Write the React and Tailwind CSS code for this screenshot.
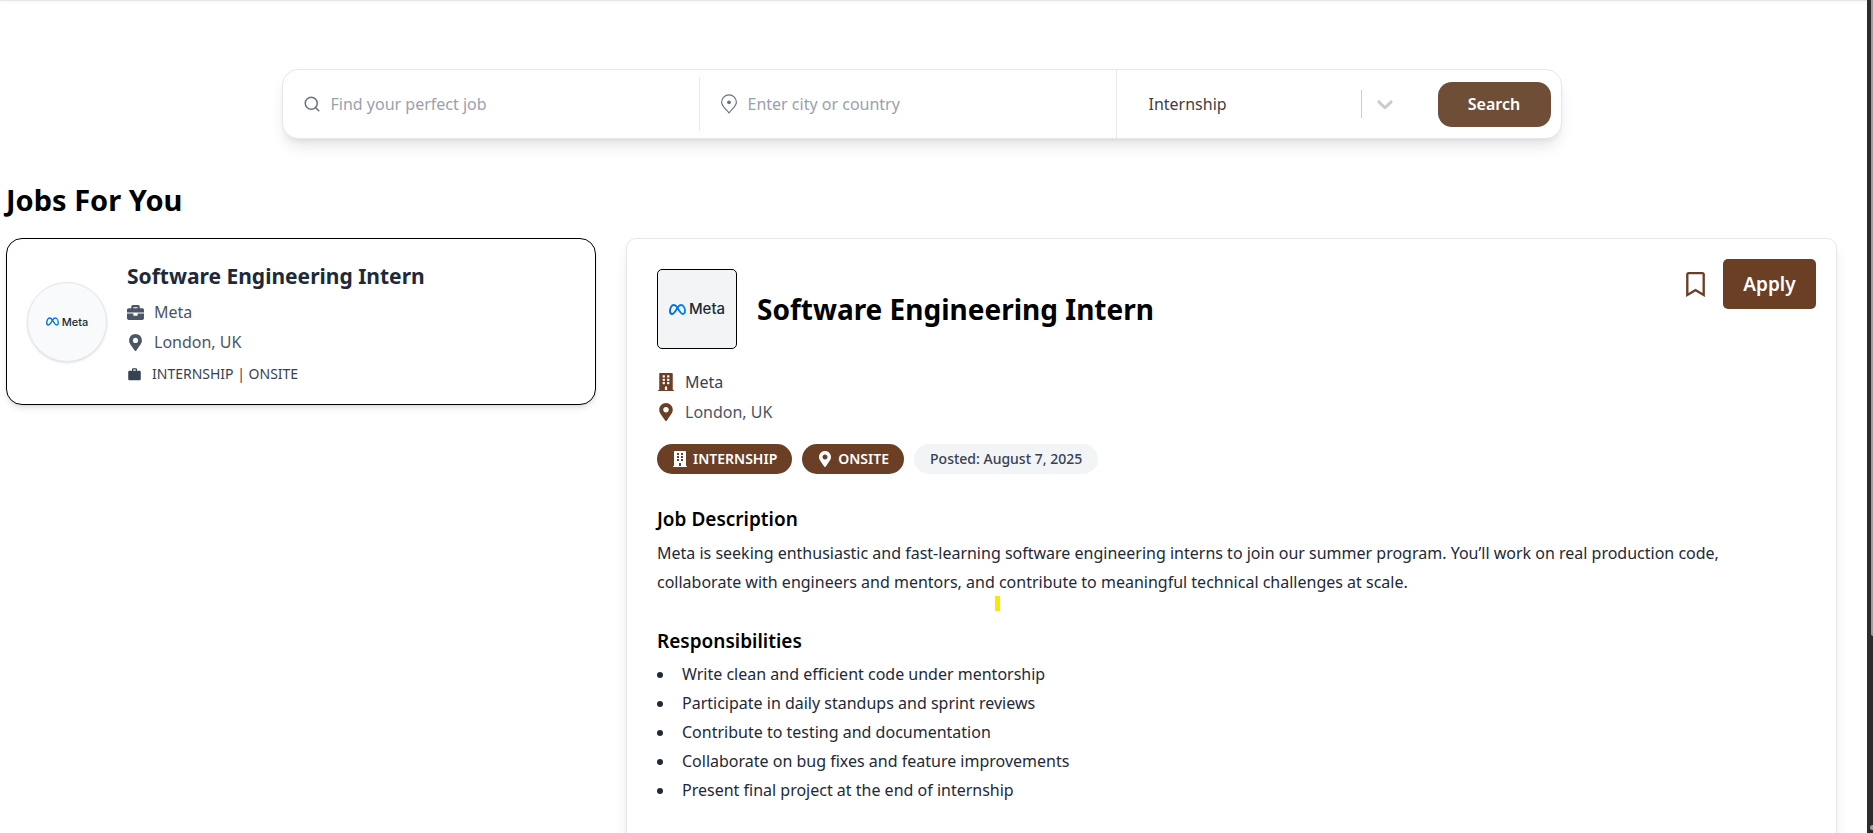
import React from "react";
import { FaBriefcase, FaBuilding, FaMapMarkerAlt, FaRegBookmark } from "react-icons/fa";
import { MdWork } from "react-icons/md";
import { FiSearch } from "react-icons/fi";

const responsibilities = [
  "Write clean and efficient code under mentorship",
  "Participate in daily standups and sprint reviews",
  "Contribute to testing and documentation",
  "Collaborate on bug fixes and feature improvements",
  "Present final project at the end of internship",
];

function PinIcon({ className }) {
  return (
    <svg viewBox="0 0 18 20" fill="none" stroke="currentColor" strokeWidth="1.2" strokeLinejoin="round" className={className} aria-hidden="true">
      <path d="M9 18.9C7.5 16.3 1.6 12.3 1.6 8.3a7.4 7.4 0 0 1 14.8 0c0 4-5.9 8-7.4 10.600z" />
      <circle cx="9" cy="8.300" r="1.900" fill="currentColor" stroke="none" />
    </svg>
  );
}

function ChevronIcon() {
  return (
    <svg viewBox="0 0 20 20" className="pointer-events-none ml-[10px] size-[26px] shrink-0 fill-[#cccccc]" aria-hidden="true">
      <path d="M4.516 7.548c0.436-0.446 1.043-0.481 1.576 0l3.908 3.747 3.908-3.747c0.533-0.481 1.141-0.446 1.574 0 0.436 0.445 0.408 1.197 0 1.615-0.406 0.418-4.695 4.502-4.695 4.502-0.217 0.223-0.502 0.335-0.787 0.335s-0.57-0.112-0.789-0.335c0 0-4.287-4.084-4.695-4.502s-0.436-1.17 0-1.615z" />
    </svg>
  );
}

function MetaLogo({ className, textClassName }) {
  return (
    <span className="flex items-center gap-[3px]">
      <svg viewBox="0 0 34 22" fill="none" strokeWidth="3.600" className={className} aria-hidden="true">
        <defs>
          <linearGradient id="meta-blue" x1="0" x2="1" y1="0" y2="0">
            <stop offset="0" stopColor="#0064e0" />
            <stop offset="0.5" stopColor="#0073ee" />
            <stop offset="1" stopColor="#0082fb" />
          </linearGradient>
        </defs>
        <path
          stroke="url(#meta-blue)"
          d="M17 7.500C14.600 4 12.500 2 9.600 2 5.200 2 2 8 2 14c0 3.800 1.600 6 4.500 6 3.500 0 5.600-3.700 10.500-12.500C19.200 3.800 21.300 2 24.200 2 28.800 2 32 8 32 14.200c0 3.600-1.600 5.800-4.400 5.800-3.500 0-5.400-3-10.600-12.500z"
        />
      </svg>
      <span className={textClassName}>Meta</span>
    </span>
  );
}

function SearchBar() {
  return (
    <form
      onSubmit={(e) => e.preventDefault()}
      className="mx-auto mt-[68px] grid h-[70px] w-full max-w-[1280px] grid-cols-[417fr_416fr_445fr] rounded-2xl border border-gray-200 bg-white shadow-lg"
    >
      <label className="my-[7px] flex items-center gap-[10px] border-r border-gray-200 px-5">
        <FiSearch className="size-[18px] shrink-0 text-gray-500" aria-hidden="true" />
        <input type="text" aria-label="Job title" placeholder="Find your perfect job" className="w-full min-w-0 text-gray-700 outline-none placeholder:text-gray-400" />
      </label>
      <label className="flex items-center gap-[10px] px-5">
        <PinIcon className="h-5 w-[18px] shrink-0 text-gray-500" />
        <input type="text" aria-label="Location" placeholder="Enter city or country" className="w-full min-w-0 text-gray-700 outline-none placeholder:text-gray-400" />
      </label>
      <div className="flex items-center border-l border-gray-200 pr-[10px] pl-8">
        <select aria-label="Job type" defaultValue="Internship" className="h-10 min-w-0 flex-1 appearance-none bg-transparent text-[#404040] outline-none">
          <option>Internship</option>
          <option>Full-time</option>
          <option>Part-time</option>
        </select>
        <span className="h-7 w-px bg-[#cccccc]" />
        <ChevronIcon />
        <button type="submit" className="ml-10 h-[45px] w-[113px] shrink-0 rounded-[14px] bg-[#6f4e37] font-semibold text-white">
          Search
        </button>
      </div>
    </form>
  );
}

function JobCard() {
  return (
    <article className="flex items-center gap-5 rounded-2xl border border-black bg-white px-5 shadow-md">
      <div className="flex size-20 shrink-0 items-center justify-center rounded-full border border-gray-200 bg-gray-50 shadow-sm">
        <MetaLogo className="h-[9px] w-[13px]" textClassName="font-[Inter] text-[11px] leading-4 font-medium text-[#1c2b33]" />
      </div>
      <div className="pt-[23px] pb-5">
        <h2 className="text-[21px] leading-7 font-bold text-gray-800">Software Engineering Intern</h2>
        <p className="mt-[10px] flex items-center gap-[10px] text-gray-600">
          <FaBriefcase className="size-[17px]" aria-hidden="true" />
          Meta
        </p>
        <p className="mt-[6px] flex items-center gap-[10px] text-gray-600">
          <FaMapMarkerAlt className="size-[17px]" aria-hidden="true" />
          London, UK
        </p>
        <p className="mt-[10px] flex items-center gap-[10px] text-sm text-gray-700">
          <MdWork className="size-[15px]" aria-hidden="true" />
          INTERNSHIP | ONSITE
        </p>
      </div>
    </article>
  );
}

function JobDetails() {
  return (
    <article className="relative min-h-[700px] rounded-[10px] border border-gray-200 bg-white p-[30px] shadow-lg">
      <div className="absolute top-5 right-5 flex items-center gap-[18px]">
        <button type="button" aria-label="Save job" className="text-[#6b3e26]">
          <FaRegBookmark className="h-[25px] w-[19px]" />
        </button>
        <button type="button" className="h-[50px] w-[93px] rounded-[5px] bg-[#6b3e26] text-[19px] font-semibold text-white">
          Apply
        </button>
      </div>

      <header className="flex items-center gap-5">
        <div className="flex size-20 shrink-0 items-center justify-center rounded-[5px] border border-black bg-gray-100">
          <MetaLogo className="h-[11px] w-[17px]" textClassName="font-[Inter] text-[15px] leading-5 font-medium text-[#1c2b33]" />
        </div>
        <h2 className="text-[28px] leading-10 font-bold text-black">Software Engineering Intern</h2>
      </header>

      <p className="mt-[21px] flex items-center gap-[10px] text-gray-700">
        <FaBuilding className="size-[18px] text-[#6b3e26]" aria-hidden="true" />
        Meta
      </p>
      <p className="mt-[6px] flex items-center gap-[10px] text-gray-600">
        <FaMapMarkerAlt className="size-[18px] text-[#6b3e26]" aria-hidden="true" />
        London, UK
      </p>

      <div className="mt-5 flex gap-[10px] text-sm">
        <span className="flex h-[30px] items-center gap-[5px] rounded-full bg-[#6b3e26] px-[15px] font-semibold text-white">
          <FaBuilding className="size-4" aria-hidden="true" />
          INTERNSHIP
        </span>
        <span className="flex h-[30px] items-center gap-[5px] rounded-full bg-[#6b3e26] px-[15px] font-semibold text-white">
          <FaMapMarkerAlt className="size-4" aria-hidden="true" />
          ONSITE
        </span>
        <span className="flex h-[30px] items-center rounded-full bg-gray-100 px-4 font-medium text-gray-700">Posted: August 7, 2025</span>
      </div>

      <section className="mt-[31px]">
        <h3 className="text-[19px] leading-7 font-semibold text-black">Job Description</h3>
        <p className="mt-[6px] pr-10 leading-[29px] text-gray-800">
          Meta is seeking enthusiastic and fast-learning software engineering interns to join our summer program. You’ll work on real production code, collaborate with engineers and mentors, and contribute to meaningful technical challenges at scale.
        </p>
      </section>

      <section className="mt-[30px]">
        <h3 className="text-[19px] leading-7 font-semibold text-black">Responsibilities</h3>
        <ul className="mt-[5px] leading-[29px] text-gray-800">
          {responsibilities.map((item) => (
            <li key={item} className="flex items-center gap-[19px] before:size-[6px] before:shrink-0 before:rounded-full before:bg-gray-800">
              {item}
            </li>
          ))}
        </ul>
      </section>

      <span className="absolute top-[357px] left-[368px] h-[15px] w-[5px] bg-[#ffe600]" />
    </article>
  );
}

export default function App() {
  return (
    <div className="flex h-screen overflow-hidden bg-white font-['Noto_Sans','Open_Sans',sans-serif] text-base">
      <main className="min-w-0 flex-1">
        <div className="h-px bg-gray-200 shadow-sm" />
        <div className="pr-[30px] pl-[6px]">
          <SearchBar />
          <h1 className="mt-[41px] mb-[18px] text-[29px] leading-10 font-bold text-black">Jobs For You</h1>
          <div className="grid grid-cols-[minmax(0,590fr)_minmax(0,1211fr)] items-start gap-[30px]">
            <JobCard />
            <JobDetails />
          </div>
        </div>
      </main>
      <div className="flex w-[6px] shrink-0 flex-col items-end bg-[#2c2c2c]" aria-hidden="true">
        <div className="h-[636px] w-[2px] rounded-bl-full bg-[#9f9f9f]" />
        <div className="mt-auto mb-[3px] h-[5px] w-[3px] rounded-l-full bg-[#9f9f9f]" />
      </div>
    </div>
  );
}
